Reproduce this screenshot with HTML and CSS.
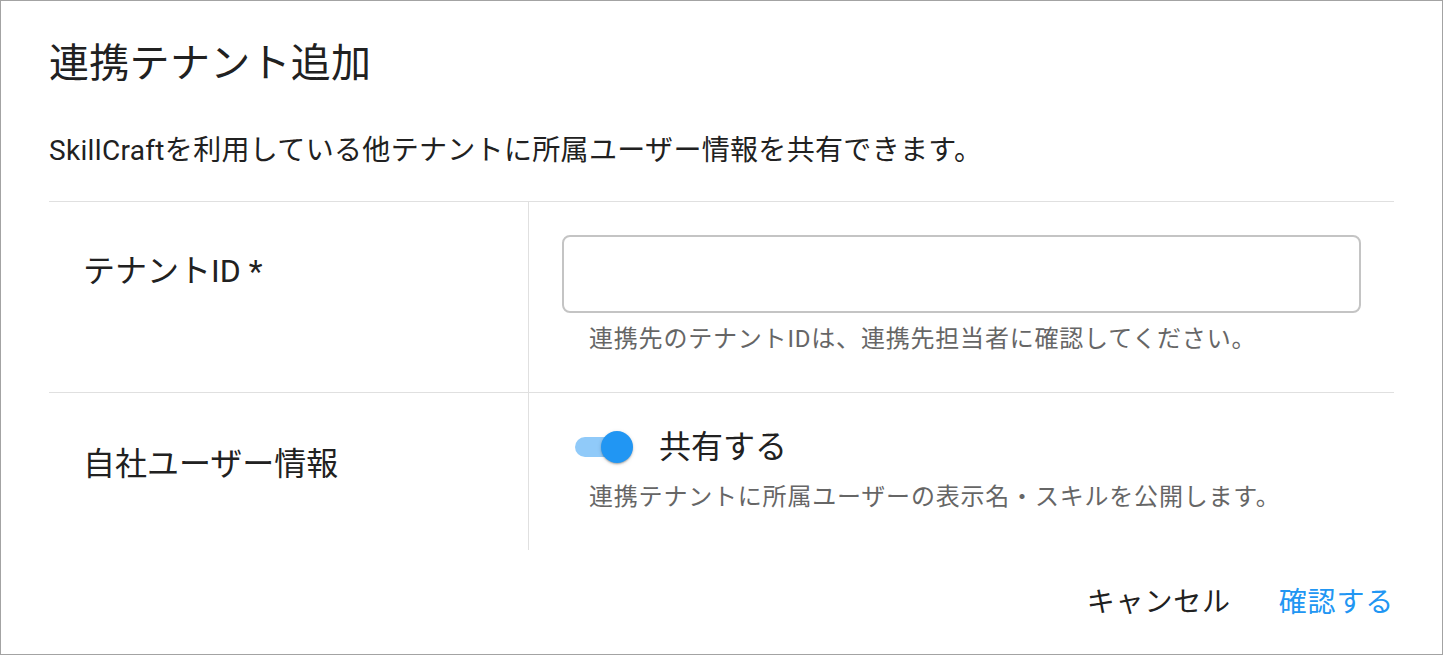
FILE: index.html
```html
<!DOCTYPE html>
<html lang="ja">
<head>
<meta charset="utf-8">
<title>連携テナント追加</title>
<link rel="stylesheet" href="styles.css">
</head>
<body>
<div class="dialog">
  <h2 class="dialog-title">連携テナント追加</h2>
  <div class="dialog-content">
    <p class="desc">SkillCraftを利用している他テナントに所属ユーザー情報を共有できます。</p>
    <div class="form-table">
      <div class="row">
        <div class="cell-label label-first">テナントID *</div>
        <div class="cell-field field-first">
          <div class="text-input"></div>
          <p class="helper">連携先のテナントIDは、連携先担当者に確認してください。</p>
        </div>
      </div>
      <div class="row">
        <div class="cell-label label-second">自社ユーザー情報</div>
        <div class="cell-field field-second">
          <label class="switch-line">
            <span class="switch">
              <span class="switch-track"></span>
              <span class="switch-thumb"></span>
            </span>
            <span class="switch-label">共有する</span>
          </label>
          <p class="helper">連携テナントに所属ユーザーの表示名・スキルを公開します。</p>
        </div>
      </div>
    </div>
  </div>
  <div class="dialog-actions">
    <button class="btn btn-cancel" type="button">キャンセル</button>
    <button class="btn btn-primary" type="button">確認する</button>
  </div>
</div>
</body>
</html>
```

FILE: styles.css
```css
html, body {
  margin: 0;
  padding: 0;
  background: #ffffff;
}

body {
  font-family: Roboto, "Noto Sans CJK JP", "Noto Sans", sans-serif;
  color: #212121;
}

.dialog {
  box-sizing: border-box;
  width: 1443px;
  height: 655px;
  border: 1px solid #a3a3a3;
  background: #ffffff;
  display: flex;
  flex-direction: column;
}

.dialog-title {
  margin: 0;
  padding: 31px 48px 0 48px;
  font-size: 40px;
  line-height: 64px;
  font-weight: 400;
  letter-spacing: 0.3px;
  color: #212121;
}

.dialog-content {
  padding: 0 48px;
}

.desc {
  margin: 35px 0 0 0;
  font-size: 28px;
  line-height: 40px;
  letter-spacing: 0.33px;
  color: #212121;
}

.form-table {
  margin-top: 30px;
  display: flex;
  flex-direction: column;
}

.row {
  display: grid;
  grid-template-columns: 480px 1fr;
  border-top: 1px solid #e0e0e0;
}

.cell-label {
  border-right: 1px solid #e0e0e0;
  padding-left: 34px;
  font-size: 32px;
  line-height: 48px;
  color: #212121;
}

.label-first {
  padding-top: 45px;
}

.label-second {
  padding-top: 47px;
}

.cell-field {
  padding: 0 33px 33px 33px;
}

.field-first {
  padding-top: 33px;
}

.field-second {
  padding-top: 30px;
}

.text-input {
  box-sizing: border-box;
  height: 78px;
  border: 2px solid #c4c4c4;
  border-radius: 8px;
  background: #ffffff;
}

.helper {
  margin: 6px 0 0 0;
  padding-left: 27px;
  font-size: 24px;
  line-height: 40px;
  letter-spacing: 0.8px;
  color: #666666;
}

.switch-line {
  display: flex;
  align-items: center;
  height: 48px;
  padding-left: 13px;
}

.switch {
  display: flex;
  align-items: center;
  width: 58px;
}

.switch-track {
  display: block;
  width: 50px;
  height: 20px;
  border-radius: 10px;
  background: #90caf9;
  flex: none;
}

.switch-thumb {
  display: block;
  width: 32px;
  height: 32px;
  border-radius: 50%;
  background: #2196f3;
  margin-left: -24px;
  flex: none;
  box-shadow: 0 2px 2px -1px rgba(0,0,0,0.2), 0 1px 2px 0 rgba(0,0,0,0.14), 0 1px 4px 0 rgba(0,0,0,0.12);
}

.switch-label {
  margin-left: 26px;
  font-size: 32px;
  line-height: 48px;
  color: #212121;
}

.dialog-actions {
  display: flex;
  justify-content: flex-end;
  align-items: center;
  gap: 16px;
  padding: 33px 32px 0 0;
}

.btn {
  font-family: Roboto, "Noto Sans CJK JP", sans-serif;
  font-size: 28px;
  line-height: 40px;
  letter-spacing: 0.8px;
  background: none;
  border: none;
  padding: 0 16px;
  margin: 0;
  cursor: pointer;
}

.btn-cancel {
  color: #212121;
}

.btn-primary {
  color: #2196f3;
}
```
